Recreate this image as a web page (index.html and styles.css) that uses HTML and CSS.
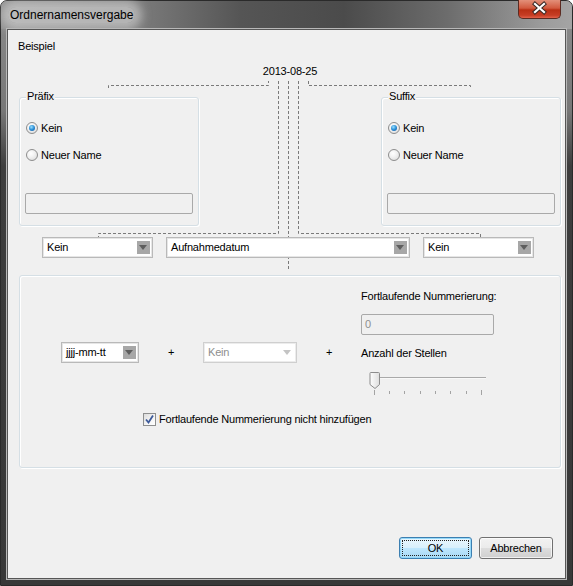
FILE: index.html
```html
<!DOCTYPE html>
<html lang="de">
<head>
    <meta charset="UTF-8">
    <title>Ordnernamensvergabe</title>
    <link rel="stylesheet" href="styles.css">
</head>
<body>
    <div class="window">
        <div class="titlebar">
            <span class="title">Ordnernamensvergabe</span>
            <div class="close">
                <svg width="43" height="19" viewBox="0 0 43 19">
                    <path d="M17 5 L26 13 M26 5 L17 13" stroke="#3b2a26" stroke-width="4.2" stroke-linecap="square"/>
                    <path d="M17 5 L26 13 M26 5 L17 13" stroke="#fff" stroke-width="2.2" stroke-linecap="square"/>
                </svg>
            </div>
        </div>

        <div class="client">
            <!-- dashed connectors of the example -->
            <svg class="connectors" width="557" height="250" viewBox="0 0 557 250">
                <g fill="none" stroke="#7a7a7a" stroke-width="1" stroke-dasharray="3 2">
                    <path d="M100.5 58 V55.5 H260.5 V51"/>
                    <path d="M270.5 51 V203.5 H90.5 V208"/>
                    <path d="M280.5 51 V240"/>
                    <path d="M290.5 51 V203.5 H472.5 V208"/>
                    <path d="M300.5 51 V55.5 H462.5 V58"/>
                </g>
            </svg>

            <div class="caption">Beispiel</div>
            <div class="date">2013-08-25</div>

            <div class="groups">
                <div class="group">
                    <span class="legend">Präfix</span>
                    <div class="radio first"><span class="dot checked"></span>Kein</div>
                    <div class="radio"><span class="dot"></span>Neuer Name</div>
                    <div class="textbox"></div>
                </div>
                <div class="group">
                    <span class="legend">Suffix</span>
                    <div class="radio first"><span class="dot checked"></span>Kein</div>
                    <div class="radio"><span class="dot"></span>Neuer Name</div>
                    <div class="textbox"></div>
                </div>
            </div>

            <div class="combos">
                <div class="combo w-side">Kein<span class="arrow"></span></div>
                <div class="combo w-main">Aufnahmedatum<span class="arrow"></span></div>
                <div class="combo w-side">Kein<span class="arrow"></span></div>
            </div>

            <div class="options">
                <div class="opt-main">
                    <div class="combo w-format">jjjj-mm-tt<span class="arrow"></span></div>
                    <span class="plus">+</span>
                    <div class="combo w-none disabled">Kein<span class="arrow"></span></div>
                    <span class="plus">+</span>
                    <div class="counter">
                        <div class="label">Fortlaufende Nummerierung:</div>
                        <div class="numbox">0</div>
                        <div class="label digits">Anzahl der Stellen</div>
                        <svg class="slider" width="118" height="25" viewBox="0 0 118 25">
                            <defs>
                                <linearGradient id="thumb" x1="0" y1="0" x2="1" y2="0">
                                    <stop offset="0" stop-color="#fdfdfd"/>
                                    <stop offset="1" stop-color="#dedede"/>
                                </linearGradient>
                            </defs>
                            <line x1="1" y1="6.5" x2="117" y2="6.5" stroke="#a9a9a9"/>
                            <line x1="1" y1="7.5" x2="117" y2="7.5" stroke="#f8f8f8"/>
                            <g stroke="#a3a3a3">
                                <line x1="5.5" y1="19" x2="5.5" y2="24"/>
                                <line x1="20.5" y1="20" x2="20.5" y2="23"/>
                                <line x1="35.5" y1="20" x2="35.5" y2="23"/>
                                <line x1="51.5" y1="20" x2="51.5" y2="23"/>
                                <line x1="66.5" y1="20" x2="66.5" y2="23"/>
                                <line x1="81.5" y1="20" x2="81.5" y2="23"/>
                                <line x1="97.5" y1="20" x2="97.5" y2="23"/>
                                <line x1="112.5" y1="19" x2="112.5" y2="24"/>
                            </g>
                            <path d="M1.5 1.5 H9.5 Q10.5 1.5 10.5 2.5 V13.5 L6 17.5 L1 13.5 V2.5 Q1 1.5 1.5 1.5 Z" fill="url(#thumb)" stroke="#8c8c8c"/>
                        </svg>
                    </div>
                </div>
                <div class="check-row">
                    <span class="checkbox">
                        <svg width="11" height="11" viewBox="0 0 11 11">
                            <path d="M2 5.5 L4.5 8.5 L9 1.5" fill="none" stroke="#3d5a9a" stroke-width="1.8"/>
                        </svg>
                    </span>
                    Fortlaufende Nummerierung nicht hinzufügen
                </div>
            </div>

            <div class="buttons">
                <button class="btn default"><span>OK</span></button>
                <button class="btn">Abbrechen</button>
            </div>
        </div>
    </div>
</body>
</html>
```

FILE: styles.css
```css
* {
    margin: 0;
    padding: 0;
    box-sizing: border-box;
}

body {
    background: #fff;
    font-family: "Liberation Sans", Arial, sans-serif;
    font-size: 11px;
    letter-spacing: -0.2px;
    color: #000;
}

.window {
    width: 573px;
    height: 586px;
    display: flex;
    flex-direction: column;
    padding: 0 6px 6px;
    border: 1px solid #2a2a2a;
    border-radius: 7px 7px 0 0;
    background: linear-gradient(180deg, #8c8c8c 0, #777 110px, #3d3d3d 165px, #383838 100%);
}

.titlebar {
    height: 28px;
    display: flex;
    align-items: center;
    margin: 0 -6px;
    padding: 0 6px;
    border-radius: 6px 6px 0 0;
    background: linear-gradient(90deg, #909090 0%, #808080 22%, #555 42%, #4b4b4b 60%, #6c6c6c 78%, #9c9c9c 95%, #a4a4a4 100%);
}

.title {
    margin-left: 1px;
    font-size: 12px;
    letter-spacing: 0;
    padding: 1px 2px;
    border-radius: 8px;
    background: rgba(222, 222, 222, 0.55);
    box-shadow: 0 0 10px 7px rgba(222, 222, 222, 0.55);
}

.close {
    margin-left: auto;
    margin-right: 5px;
    align-self: flex-start;
    margin-top: -1px;
    width: 43px;
    height: 19px;
    border: 1px solid #5b2b22;
    border-top: none;
    border-radius: 0 0 5px 5px;
    background: linear-gradient(180deg, #e3907a 0%, #d25a3f 45%, #b92f14 55%, #c63d24 85%, #e2614a 100%);
    overflow: hidden;
}

.close svg {
    display: block;
    margin: -1px 0 0 -1px;
}

.client {
    flex: 1;
    position: relative;
    display: flex;
    flex-direction: column;
    background: #f0f0f0;
    border: 1px solid #565656;
    box-shadow: 0 0 0 1px #b8b8b8;
    padding: 10px 4px 0 11px;
}

.connectors {
    position: absolute;
    left: 0;
    top: 0;
}

.caption {
    line-height: 13px;
    margin-left: -1px;
}

.date {
    margin-top: 12px;
    line-height: 13px;
    text-align: center;
    position: relative;
}

.groups {
    margin-top: 19px;
    display: flex;
    justify-content: space-between;
}

.group {
    position: relative;
    width: 180px;
    height: 129px;
    border: 1px solid #d5dfe5;
    border-radius: 3px;
    box-shadow: inset 1px 1px 0 #fff, 1px 1px 0 #fff;
    display: flex;
    flex-direction: column;
}

.legend {
    position: absolute;
    top: -8px;
    left: 6px;
    padding: 0 1px;
    line-height: 13px;
    background: #f0f0f0;
}

.radio {
    display: flex;
    align-items: center;
    height: 14px;
    margin: 13px 0 0 6px;
    gap: 3px;
}

.radio.first {
    margin-top: 23px;
}

.dot {
    width: 12px;
    height: 12px;
    border-radius: 50%;
    border: 1px solid #8d8d8d;
    background: radial-gradient(circle at 40% 35%, #fff 0, #f2f2f2 40%, #d6d6d6 100%);
    display: flex;
    align-items: center;
    justify-content: center;
}

.dot.checked::after {
    content: "";
    width: 6px;
    height: 6px;
    border-radius: 50%;
    background: radial-gradient(circle at 40% 35%, #9be0ff 0, #2a8ed6 50%, #11509a 100%);
}

.textbox {
    margin: 31px 0 0 5px;
    width: 168px;
    height: 21px;
    border: 1px solid #a9a9a9;
    border-radius: 2px;
    background: #f0f0f0;
}

.combos {
    margin-top: 11px;
    padding-left: 23px;
    display: flex;
    gap: 13px;
    position: relative;
}

.combo {
    height: 21px;
    display: flex;
    align-items: center;
    padding-left: 4px;
    background: #fff;
    border: 1px solid #b9b9b9;
    box-shadow: inset 0 0 0 1px #e6e6e6;
    line-height: 13px;
}

.w-side { width: 111px; }
.w-main { width: 244px; }
.w-format { width: 78px; }
.w-none { width: 94px; }

.arrow {
    margin-left: auto;
    margin-right: 2px;
    width: 13px;
    height: 13px;
    background: #a7a7a7;
    position: relative;
}

.arrow::after {
    content: "";
    position: absolute;
    left: 2px;
    top: 4px;
    border-left: 4.5px solid transparent;
    border-right: 4.5px solid transparent;
    border-top: 5px solid #5e5e5e;
}

.combo.disabled {
    color: #8e8e8e;
    border-color: #cfcfcf;
    box-shadow: inset 0 0 0 1px #ececec;
}

.combo.disabled .arrow {
    background: none;
}

.combo.disabled .arrow::after {
    border-top-color: #c4c4c4;
}

.options {
    margin-top: 17px;
    height: 193px;
    border: 1px solid #d5dfe5;
    border-radius: 3px;
    box-shadow: inset 1px 1px 0 #fff, 1px 1px 0 #fff;
}

.opt-main {
    display: flex;
    align-items: flex-start;
    padding-left: 41px;
}

.opt-main > .combo {
    margin-top: 66px;
}

.plus {
    margin-top: 66px;
    width: 64px;
    height: 21px;
    line-height: 21px;
    text-align: center;
}

.counter {
    margin-top: 14px;
    display: flex;
    flex-direction: column;
    align-items: flex-start;
}

.label {
    line-height: 13px;
}

.numbox {
    margin-top: 11px;
    width: 133px;
    height: 21px;
    line-height: 19px;
    padding-left: 3px;
    color: #8e8e8e;
    border: 1px solid #a9a9a9;
    border-radius: 2px;
    background: #f0f0f0;
}

.label.digits {
    margin-top: 12px;
}

.slider {
    display: block;
    margin: 11px 0 0 8px;
}

.check-row {
    margin-top: 17px;
    padding-left: 123px;
    display: flex;
    align-items: center;
    gap: 3px;
    line-height: 13px;
}

.checkbox {
    width: 13px;
    height: 13px;
    border: 1px solid #8e8f8f;
    background: linear-gradient(135deg, #dcdcdc 0%, #f6f6f6 60%, #fff 100%);
    display: flex;
    align-items: center;
    justify-content: center;
}

.buttons {
    margin-top: auto;
    padding: 0 8px 19px 0;
    display: flex;
    justify-content: flex-end;
    gap: 7px;
}

.btn {
    width: 74px;
    height: 22px;
    font-family: inherit;
    font-size: 11px;
    letter-spacing: -0.2px;
    color: #000;
    border: 1px solid #707070;
    border-radius: 3px;
    background: linear-gradient(180deg, #f2f2f2 0%, #ebebeb 48%, #dddddd 52%, #cfcfcf 100%);
    box-shadow: inset 0 0 0 1px rgba(255, 255, 255, 0.7);
}

.btn.default {
    width: 73px;
    border-color: #3c7fb1;
    background: linear-gradient(180deg, #eaf6fd 0%, #d9f0fc 48%, #bee6fd 52%, #a7d9f5 100%);
    box-shadow: inset 0 0 0 1px #96d9f9;
    padding: 2px;
}

.btn.default span {
    display: flex;
    align-items: center;
    justify-content: center;
    height: 100%;
    border: 1px dotted #222;
}
```
